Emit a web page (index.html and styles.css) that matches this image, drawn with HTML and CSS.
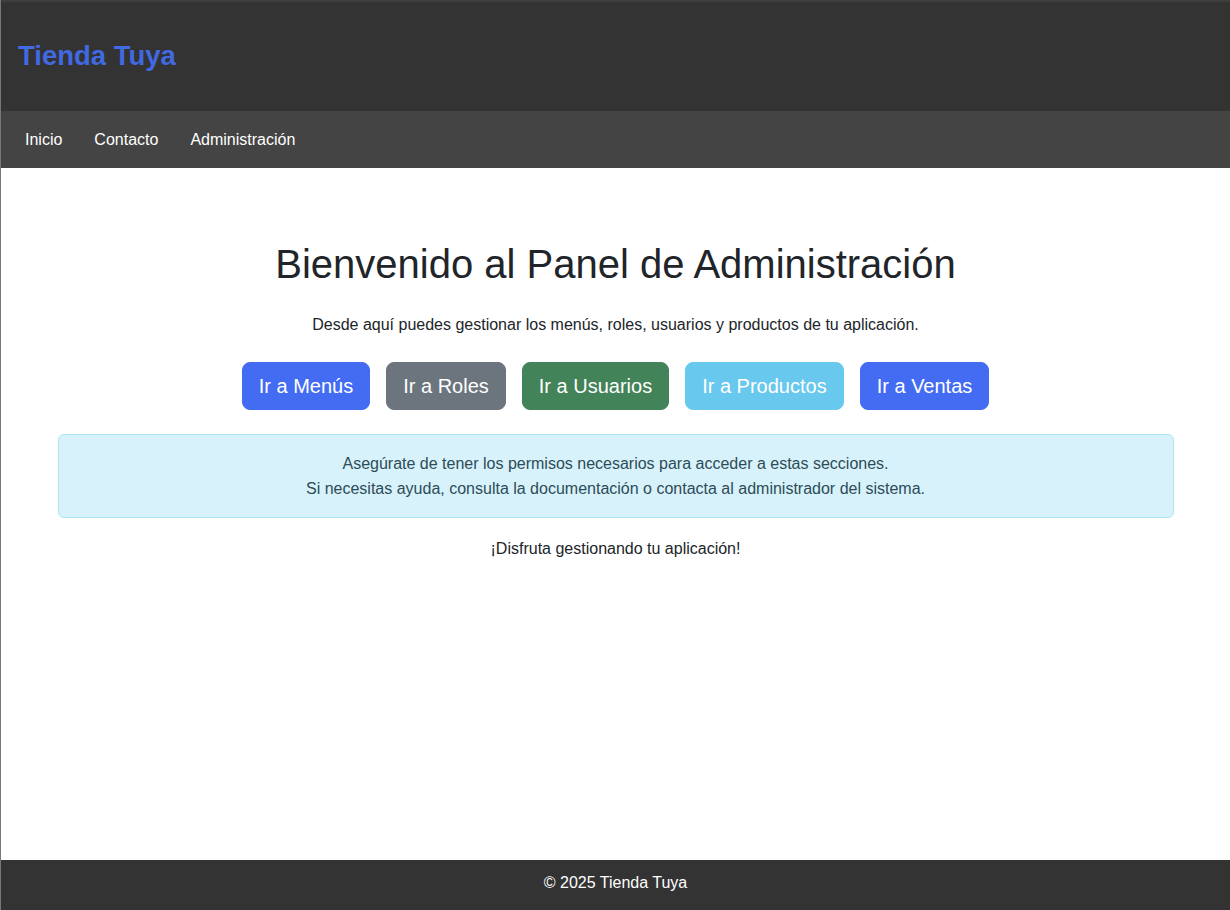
FILE: index.html
```html
<!DOCTYPE html>
<html lang="es">
<head>
<meta charset="utf-8">
<title>Tienda Tuya</title>
<link rel="stylesheet" href="styles.css">
</head>
<body>
<div class="page">
  <header class="site-header">
    <h1 class="brand">Tienda Tuya</h1>
  </header>
  <nav class="site-nav">
    <a href="#" class="nav-link">Inicio</a>
    <a href="#" class="nav-link">Contacto</a>
    <a href="#" class="nav-link">Administración</a>
  </nav>
  <main class="main">
    <div class="container">
      <h2 class="title">Bienvenido al Panel de Administración</h2>
      <p class="lead">Desde aquí puedes gestionar los menús, roles, usuarios y productos de tu aplicación.</p>
      <div class="actions">
        <a href="#" class="btn btn-primary">Ir a Menús</a>
        <a href="#" class="btn btn-secondary">Ir a Roles</a>
        <a href="#" class="btn btn-success">Ir a Usuarios</a>
        <a href="#" class="btn btn-info">Ir a Productos</a>
        <a href="#" class="btn btn-primary">Ir a Ventas</a>
      </div>
      <div class="alert">
        <div>Asegúrate de tener los permisos necesarios para acceder a estas secciones.</div>
        <div>Si necesitas ayuda, consulta la documentación o contacta al administrador del sistema.</div>
      </div>
      <p class="closing">¡Disfruta gestionando tu aplicación!</p>
    </div>
  </main>
  <footer class="site-footer">© 2025 Tienda Tuya</footer>
</div>
</body>
</html>
```
FILE: styles.css
```css
html, body {
  margin: 0;
  padding: 0;
}
body {
  font-family: "Liberation Sans", Arial, sans-serif;
  font-size: 16px;
  line-height: 24px;
  color: #212529;
  background: #fff;
}
.page {
  min-height: 100vh;
  display: flex;
  flex-direction: column;
  border-left: 1px solid #777;
  box-sizing: border-box;
}
.site-header {
  background: #333;
  border-top: 2px solid #3e3e3e;
  padding: 35px 17px 37px;
}
.brand {
  margin: 0;
  font-size: 27.5px;
  line-height: 37px;
  font-weight: 700;
  color: #4169e1;
}
.site-nav {
  background: #444;
  padding: 19px 8px;
  display: flex;
}
.nav-link {
  color: #fff;
  text-decoration: none;
  padding: 0 16px;
  line-height: 19px;
}
.main {
  flex: 1;
}
.container {
  width: 1116px;
  margin: 0 auto;
  padding-top: 72px;
  text-align: center;
}
.title {
  margin: 0 0 25px;
  font-size: 40px;
  line-height: 48px;
  font-weight: 400;
  color: #212529;
}
.lead {
  margin: 0 0 25px;
}
.actions {
  display: flex;
  justify-content: center;
  gap: 16px;
  margin-bottom: 24px;
}
.btn {
  display: inline-block;
  font-size: 20px;
  line-height: 30px;
  padding: 8px 16px;
  border: 1px solid transparent;
  border-radius: 8px;
  color: #fff;
  text-decoration: none;
}
.btn-primary { background: #436cf3; border-color: #436cf3; }
.btn-secondary { background: #6c757d; border-color: #6c757d; }
.btn-success { background: #438359; border-color: #438359; }
.btn-info { background: #68c8ed; border-color: #68c8ed; }
.alert {
  background: #d8f2fb;
  border: 1px solid #a8e6f6;
  border-radius: 6px;
  padding: 16px;
  line-height: 25px;
  color: #2c4c57;
  margin-bottom: 19px;
}
.closing {
  margin: 0;
}
.site-footer {
  background: #333;
  color: #fff;
  text-align: center;
  padding: 11px 0 15px;
  line-height: 24px;
}
```
